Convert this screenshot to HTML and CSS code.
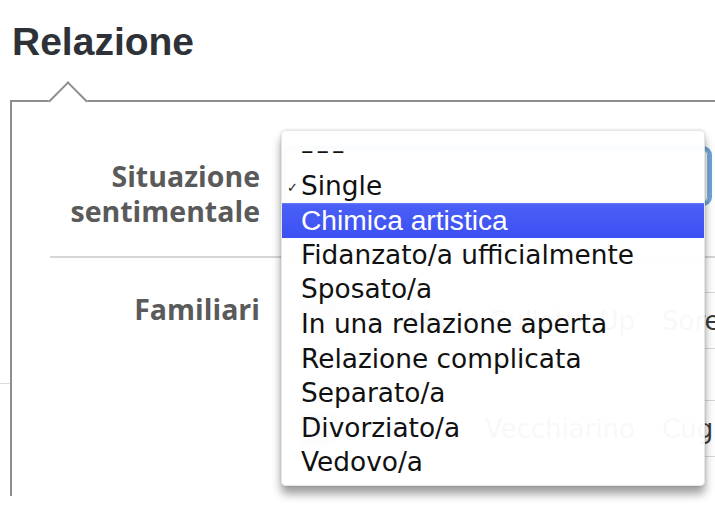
FILE: index.html
```html
<!DOCTYPE html>
<html lang="it">
<head>
    <meta charset="UTF-8">
    <meta name="viewport" content="width=device-width, initial-scale=1.0">
    <title>Relazione</title>
    <link rel="stylesheet" href="styles.css">
</head>
<body>
    <h1 class="title">Relazione</h1>

    <div class="page">
        <div class="gutter"><div class="gutter-rule"></div></div>

        <section class="panel">
            <div class="row row-status">
                <div class="label">Situazione<br>sentimentale</div>
                <div class="field">
                    <div class="select"></div>

                    <ul class="dropdown">
                        <li class="empty">&ndash;&ndash;&ndash;</li>
                        <li class="checked">Single</li>
                        <li class="active">Chimica artistica</li>
                        <li>Fidanzato/a ufficialmente</li>
                        <li>Sposato/a</li>
                        <li>In una relazione aperta</li>
                        <li>Relazione complicata</li>
                        <li>Separato/a</li>
                        <li>Divorziato/a</li>
                        <li>Vedovo/a</li>
                    </ul>
                </div>
            </div>

            <div class="row row-family">
                <div class="label">Familiari</div>
                <div class="field">
                    <div class="family-item">
                        <div class="photo"></div>
                        <div class="name">Maria Gullotta Up</div>
                        <div class="relation">Sorella</div>
                    </div>
                    <div class="family-item">
                        <div class="photo"></div>
                        <div class="name">Vecchiarino</div>
                        <div class="relation">Cugino</div>
                    </div>
                </div>
            </div>
        </section>
    </div>
</body>
</html>
```

FILE: styles.css
```css
body {
    margin: 0;
    padding: 0;
    background-color: #fff;
    color: #333;
    overflow: hidden;
    height: 520px;
}
.title {
    font-family: "Liberation Sans", Arial, sans-serif;
    font-size: 39px;
    line-height: 39px;
    font-weight: bold;
    color: #2e3238;
    margin: 22px 0 0 12px;
}
.page {
    display: flex;
    margin-top: 39px;
}
.gutter {
    width: 10px;
    flex: none;
}
.gutter-rule {
    margin-top: 283px;
    height: 1px;
    background-color: #dcdcdc;
}
.panel {
    position: relative;
    flex: none;
    width: 780px;
    height: 396px;
    box-sizing: border-box;
    border-top: 2px solid #8e8e8e;
    border-left: 2px solid #8e8e8e;
    padding-left: 38px;
}
.panel::before {
    content: "";
    position: absolute;
    left: 42px;
    top: -15px;
    width: 28px;
    height: 28px;
    box-sizing: border-box;
    background-color: #fff;
    border-top: 2px solid #8e8e8e;
    border-left: 2px solid #8e8e8e;
    transform: rotate(45deg);
}
.row {
    display: grid;
    grid-template-columns: 210px 1fr;
    column-gap: 21px;
}
.label {
    font-family: "Open Sans", sans-serif;
    font-weight: bold;
    font-size: 28.5px;
    line-height: 35px;
    color: #5a5a5a;
    text-align: right;
}
.row-status {
    padding: 48px 0 27px;
    border-bottom: 2px solid #d6d6d6;
}
.row-status .label {
    margin-top: 9px;
}
.row-family {
    padding-top: 34px;
}
.field {
    position: relative;
}
.select {
    width: 422px;
    height: 52px;
    margin-left: 5px;
    box-sizing: border-box;
    border: 1px solid #8ab4dc;
    border-radius: 5px;
    box-shadow: 0 0 0 4px #6fa6d8;
}
.dropdown {
    position: absolute;
    z-index: 10;
    left: 0;
    top: -20px;
    width: 424px;
    height: 356px;
    box-sizing: border-box;
    margin: 0;
    padding: 3px 0 0;
    list-style: none;
    background-color: rgba(255, 255, 255, 0.965);
    border: 1px solid rgba(0, 0, 0, 0.1);
    border-radius: 5px;
    box-shadow: 0 8px 10px rgba(0, 0, 0, 0.38), 0 0 3px rgba(0, 0, 0, 0.15);
    font-family: "DejaVu Sans", sans-serif;
    font-size: 26.4px;
    color: #111;
}
.dropdown li {
    position: relative;
    height: 34.6px;
    line-height: 34.6px;
    padding-left: 19px;
    white-space: nowrap;
}
.dropdown li.empty {
    letter-spacing: 3px;
    font-size: 25px;
}
.dropdown li.checked::before {
    content: "\2713";
    position: absolute;
    left: 5px;
    top: 2px;
    font-size: 13px;
}
.dropdown li.active {
    background: linear-gradient(#6a7cf9 0, #4a5ff6 2px, #3c50f3 100%);
    color: #fff;
    font-family: "Liberation Sans", Arial, sans-serif;
    font-size: 28.2px;
}
.family-item {
    display: grid;
    grid-template-columns: 98px 283px 1fr;
    align-items: center;
    height: 55px;
    border-top: 1px solid #d8d8d8;
    border-bottom: 1px solid #d8d8d8;
    font-family: "DejaVu Sans", sans-serif;
    font-size: 26px;
    color: #3a3a3a;
    white-space: nowrap;
}
.family-item + .family-item {
    margin-top: 51px;
}
.photo {
    width: 34px;
    height: 34px;
    margin-left: 20px;
    background-color: #c9c9c9;
}
.name {
    text-align: right;
    padding-right: 27px;
    overflow: hidden;
}
```
